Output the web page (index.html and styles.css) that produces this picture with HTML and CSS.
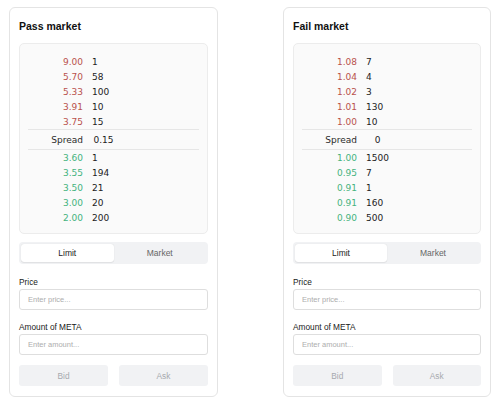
FILE: index.html
```html
<!DOCTYPE html>
<html>
<head>
<meta charset="utf-8">
<link rel="stylesheet" href="styles.css">
</head>
<body>
<div class="page">
  <section class="card">
    <h2 class="title">Pass market</h2>
    <div class="book">
      <div class="rows">
        <div class="row"><span class="price ask">9.00</span><span class="size">1</span></div>
        <div class="row"><span class="price ask">5.70</span><span class="size">58</span></div>
        <div class="row"><span class="price ask">5.33</span><span class="size">100</span></div>
        <div class="row"><span class="price ask">3.91</span><span class="size">10</span></div>
        <div class="row"><span class="price ask">3.75</span><span class="size">15</span></div>
      </div>
      <div class="row spread"><span class="price">Spread</span><span class="size center">0.15</span></div>
      <div class="rows">
        <div class="row"><span class="price bid">3.60</span><span class="size">1</span></div>
        <div class="row"><span class="price bid">3.55</span><span class="size">194</span></div>
        <div class="row"><span class="price bid">3.50</span><span class="size">21</span></div>
        <div class="row"><span class="price bid">3.00</span><span class="size">20</span></div>
        <div class="row"><span class="price bid">2.00</span><span class="size">200</span></div>
      </div>
    </div>
    <div class="tabs">
      <button class="tab active">Limit</button>
      <button class="tab">Market</button>
    </div>
    <label class="field">
      <span class="label">Price</span>
      <input class="input" type="text" placeholder="Enter price...">
    </label>
    <label class="field">
      <span class="label">Amount of META</span>
      <input class="input" type="text" placeholder="Enter amount...">
    </label>
    <div class="actions">
      <button class="action" disabled>Bid</button>
      <button class="action" disabled>Ask</button>
    </div>
  </section>

  <section class="card">
    <h2 class="title">Fail market</h2>
    <div class="book">
      <div class="rows">
        <div class="row"><span class="price ask">1.08</span><span class="size">7</span></div>
        <div class="row"><span class="price ask">1.04</span><span class="size">4</span></div>
        <div class="row"><span class="price ask">1.02</span><span class="size">3</span></div>
        <div class="row"><span class="price ask">1.01</span><span class="size">130</span></div>
        <div class="row"><span class="price ask">1.00</span><span class="size">10</span></div>
      </div>
      <div class="row spread"><span class="price">Spread</span><span class="size center">0</span></div>
      <div class="rows">
        <div class="row"><span class="price bid">1.00</span><span class="size">1500</span></div>
        <div class="row"><span class="price bid">0.95</span><span class="size">7</span></div>
        <div class="row"><span class="price bid">0.91</span><span class="size">1</span></div>
        <div class="row"><span class="price bid">0.91</span><span class="size">160</span></div>
        <div class="row"><span class="price bid">0.90</span><span class="size">500</span></div>
      </div>
    </div>
    <div class="tabs">
      <button class="tab active">Limit</button>
      <button class="tab">Market</button>
    </div>
    <label class="field">
      <span class="label">Price</span>
      <input class="input" type="text" placeholder="Enter price...">
    </label>
    <label class="field">
      <span class="label">Amount of META</span>
      <input class="input" type="text" placeholder="Enter amount...">
    </label>
    <div class="actions">
      <button class="action" disabled>Bid</button>
      <button class="action" disabled>Ask</button>
    </div>
  </section>
</div>
</body>
</html>
```

FILE: styles.css
```css
* { box-sizing: border-box; }
html, body {
  margin: 0;
  padding: 0;
  background: #ffffff;
}
body {
  font-family: "Liberation Sans", Arial, sans-serif;
  color: #1f1f1f;
}
.page {
  display: grid;
  grid-template-columns: 209px 208px;
  justify-content: space-between;
  padding: 7px 9px 0 9px;
}
.card {
  border: 1px solid #e4e4e4;
  border-radius: 6px;
  padding: 11px 9px 10px 9px;
  display: flex;
  flex-direction: column;
  background: #fff;
}
.title {
  margin: 0 0 9px 0;
  font-size: 10.5px;
  line-height: 15px;
  font-weight: bold;
  color: #111;
}
.book {
  border: 1px solid #ececec;
  background: #fafafa;
  border-radius: 5px;
  padding: 10px 8px 8px 8px;
  font-family: "DejaVu Sans", Verdana, sans-serif;
  font-size: 9px;
}
.row {
  display: grid;
  grid-template-columns: 55px 23px;
  column-gap: 9px;
  height: 15px;
  line-height: 16px;
}
.price { text-align: right; }
.size { text-align: left; color: #222; }
.size.center { text-align: center; }
.ask { color: #b9524c; }
.bid { color: #45b37e; }
.spread {
  height: 21px;
  line-height: 20px;
  border-top: 1px solid #e6e6e6;
  border-bottom: 1px solid #e6e6e6;
  color: #2a2a2a;
}
.spread .price { color: #2a2a2a; }
.tabs {
  margin-top: 8px;
  display: grid;
  grid-template-columns: 1fr 1fr;
  background: #f1f2f4;
  border-radius: 4px;
  padding: 2px;
  height: 22px;
}
.tab {
  border: none;
  background: transparent;
  font-family: "Liberation Sans", Arial, sans-serif;
  font-size: 8.5px;
  color: #666;
  padding: 0;
  border-radius: 3px;
  height: 18px;
}
.tab.active {
  background: #fff;
  color: #222;
  box-shadow: 0 0 1px rgba(0,0,0,0.15), 0 1px 1px rgba(0,0,0,0.06);
}
.field {
  display: flex;
  flex-direction: column;
  margin-top: 12px;
}
.tabs + .field { margin-top: 13px; }
.label {
  font-size: 8.3px;
  line-height: 10px;
  margin-bottom: 2px;
  color: #1a1a1a;
}
.input {
  height: 21px;
  border: 1px solid #dedede;
  border-radius: 3px;
  padding: 0 8px;
  font-family: "Liberation Sans", Arial, sans-serif;
  font-size: 7.5px;
  background: #fff;
  outline: none;
}
.input::placeholder { color: #adadad; }
.actions {
  margin-top: 10px;
  display: grid;
  grid-template-columns: 1fr 1fr;
  column-gap: 11px;
}
.action {
  height: 21px;
  border: none;
  border-radius: 3px;
  background: #f1f2f4;
  color: #a6a9ae;
  font-family: "Liberation Sans", Arial, sans-serif;
  font-size: 8.3px;
  padding: 0;
}
```
